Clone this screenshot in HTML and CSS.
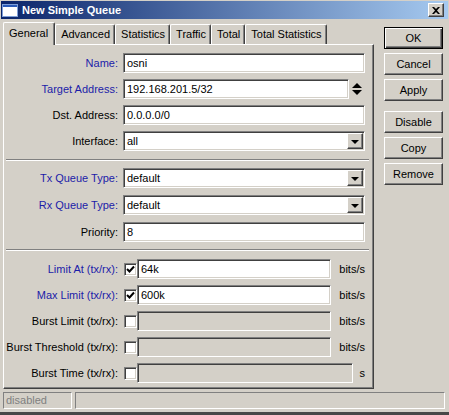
FILE: index.html
```html
<!DOCTYPE html>
<html>
<head>
<meta charset="utf-8">
<link rel="stylesheet" href="styles.css">
</head>
<body>
<div class="window">
  <div class="titlebar">
    <svg class="appicon" width="16" height="14" viewBox="0 0 16 14">
      <rect x="0.5" y="1.5" width="15" height="12" fill="#ffffff" stroke="#7f9fd8"/>
      <rect x="1" y="2" width="14" height="2" fill="#2a5ab8"/>
    </svg>
    <span class="title">New Simple Queue</span>
    <span class="close">
      <svg width="8" height="7" viewBox="0 0 8 7">
        <path d="M0 0 L2 0 L4 2 L6 0 L8 0 L5 3.5 L8 7 L6 7 L4 5 L2 7 L0 7 L3 3.5 Z" fill="#000"/>
      </svg>
    </span>
  </div>

  <div class="main">
    <div class="left">
      <div class="tabs">
        <div class="tab active">General</div>
        <div class="tab">Advanced</div>
        <div class="tab">Statistics</div>
        <div class="tab">Traffic</div>
        <div class="tab">Total</div>
        <div class="tab">Total Statistics</div>
      </div>
      <div class="panel">
        <div class="group g1">
          <div class="row">
            <div class="label blue">Name:</div>
            <div class="input">osni</div>
          </div>
          <div class="row">
            <div class="label blue">Target Address:</div>
            <div class="field">
              <div class="input grow">192.168.201.5/32</div>
              <div class="spin">
                <svg width="10" height="12" viewBox="0 0 10 12">
                  <path d="M5 0 L10 5 L0 5 Z" fill="#000"/>
                  <path d="M0 7 L10 7 L5 12 Z" fill="#000"/>
                </svg>
              </div>
            </div>
          </div>
          <div class="row">
            <div class="label">Dst. Address:</div>
            <div class="input">0.0.0.0/0</div>
          </div>
          <div class="row">
            <div class="label">Interface:</div>
            <div class="input select"><span class="val">all</span><span class="dd"><span class="tri"></span></span></div>
          </div>
        </div>
        <div class="sep"></div>
        <div class="group g2">
          <div class="row">
            <div class="label blue">Tx Queue Type:</div>
            <div class="input select"><span class="val">default</span><span class="dd"><span class="tri"></span></span></div>
          </div>
          <div class="row">
            <div class="label blue">Rx Queue Type:</div>
            <div class="input select"><span class="val">default</span><span class="dd"><span class="tri"></span></span></div>
          </div>
          <div class="row">
            <div class="label">Priority:</div>
            <div class="input">8</div>
          </div>
        </div>
        <div class="sep sep2"></div>
        <div class="group g1">
          <div class="row">
            <div class="label blue">Limit At (tx/rx):</div>
            <div class="field">
              <span class="cb"><svg width="9" height="9" viewBox="0 0 9 9"><path d="M1 4 L3.5 6.5 L8 1.5" stroke="#000" stroke-width="2" fill="none"/></svg></span>
              <div class="input w-bits">64k</div>
              <span class="unit">bits/s</span>
            </div>
          </div>
          <div class="row">
            <div class="label blue">Max Limit (tx/rx):</div>
            <div class="field">
              <span class="cb"><svg width="9" height="9" viewBox="0 0 9 9"><path d="M1 4 L3.5 6.5 L8 1.5" stroke="#000" stroke-width="2" fill="none"/></svg></span>
              <div class="input w-bits">600k</div>
              <span class="unit">bits/s</span>
            </div>
          </div>
          <div class="row">
            <div class="label">Burst Limit (tx/rx):</div>
            <div class="field">
              <span class="cb"></span>
              <div class="input w-bits disabled"></div>
              <span class="unit">bits/s</span>
            </div>
          </div>
          <div class="row">
            <div class="label">Burst Threshold (tx/rx):</div>
            <div class="field">
              <span class="cb"></span>
              <div class="input w-bits disabled"></div>
              <span class="unit">bits/s</span>
            </div>
          </div>
          <div class="row">
            <div class="label">Burst Time (tx/rx):</div>
            <div class="field">
              <span class="cb"></span>
              <div class="input w-s disabled"></div>
              <span class="unit unit-s">s</span>
            </div>
          </div>
        </div>
      </div>
    </div>

    <div class="buttons">
      <div class="btn default">OK</div>
      <div class="btn">Cancel</div>
      <div class="btn">Apply</div>
      <div class="btn gap">Disable</div>
      <div class="btn">Copy</div>
      <div class="btn">Remove</div>
    </div>
  </div>

  <div class="status">
    <div class="cell c1">disabled</div>
    <div class="cell c2"></div>
  </div>
</div>
</body>
</html>
```

FILE: styles.css
```css
* { box-sizing: border-box; }

body {
  margin: 0;
  background: #d4d0c8;
  font-family: "Liberation Sans", Arial, sans-serif;
  font-size: 11px;
  color: #000;
}

.window {
  width: 449px;
  height: 415px;
  background: #d4d0c8;
  padding-top: 1px;
  padding-left: 1px;
  border-bottom: 3px solid #474747;
  display: flex;
  flex-direction: column;
  overflow: hidden;
}

.titlebar {
  height: 18px;
  margin-right: 1px;
  background: linear-gradient(to right, #0a246a, #a6caf0);
  display: flex;
  align-items: center;
  padding-left: 1px;
  padding-right: 4px;
  color: #fff;
  font-weight: bold;
  font-size: 11px;
}

.appicon { margin-right: 4px; }

.title { white-space: nowrap; }

.close {
  margin-left: auto;
  width: 16px;
  height: 14px;
  background: #d4d0c8;
  border: 1px solid;
  border-color: #fff #404040 #404040 #fff;
  box-shadow: inset -1px -1px #808080;
  display: flex;
  align-items: center;
  justify-content: center;
  padding-right: 1px;
}

.main {
  display: flex;
  gap: 10px;
  padding: 3px 0 0 2px;
}

.left { width: 371px; }

.tabs {
  display: flex;
  height: 22px;
  align-items: flex-end;
  position: relative;
  z-index: 1;
}

.tab {
  height: 20px;
  padding: 0 4px 0 5px;
  line-height: 19px;
  white-space: nowrap;
  background: #d4d0c8;
  border-top: 1px solid #fff;
  border-left: 1px solid #fff;
  border-right: 1px solid #404040;
  box-shadow: inset -1px 0 #808080;
  border-radius: 2px 2px 0 0;
}

.tab.active {
  height: 23px;
  line-height: 20px;
  margin-bottom: -1px;
  padding: 0 6px 0 5px;
}

.panel {
  border: 1px solid;
  border-color: #fff #404040 #404040 #fff;
  box-shadow: inset -1px -1px #808080;
  padding: 8px 8px 5px 0;
}

.group {
  display: flex;
  flex-direction: column;
  gap: 6px;
}

.g2 { gap: 7px; }

.row {
  display: grid;
  grid-template-columns: 114px 242px;
  column-gap: 5px;
  height: 20px;
  align-items: center;
}

.label {
  text-align: right;
  white-space: nowrap;
}

.blue { color: #1c1ca8; }

.input {
  height: 20px;
  background: #fff;
  border: 1px solid;
  border-color: #808080 #fff #fff #808080;
  box-shadow: inset 1px 1px #404040, inset -1px -1px #d4d0c8;
  padding-left: 3px;
  line-height: 18px;
  white-space: nowrap;
  overflow: hidden;
}

.input.disabled { background: #d4d0c8; }

.field {
  display: flex;
  align-items: center;
  height: 20px;
}

.grow { flex: 1; }

.spin {
  width: 16px;
  display: flex;
  justify-content: flex-end;
  padding-right: 3px;
}

.select {
  display: flex;
  align-items: center;
  padding: 1px;
}

.select .val {
  flex: 1;
  padding-left: 2px;
}

.dd {
  width: 16px;
  height: 16px;
  background: #d4d0c8;
  border: 1px solid;
  border-color: #fff #404040 #404040 #fff;
  box-shadow: inset -1px -1px #808080;
  display: flex;
  align-items: center;
  justify-content: center;
}

.tri {
  width: 0;
  height: 0;
  border-left: 4px solid transparent;
  border-right: 4px solid transparent;
  border-top: 4px solid #000;
  margin-top: 1px;
}

.sep {
  height: 2px;
  border-top: 1px solid #808080;
  border-bottom: 1px solid #fff;
  margin: 8px -4px 7px 2px;
}

.sep2 { margin: 7px -4px 8px 2px; }

.cb {
  width: 13px;
  height: 13px;
  margin-left: 1px;
  background: #fff;
  border: 1px solid;
  border-color: #808080 #fff #fff #808080;
  box-shadow: inset 1px 1px #404040, inset -1px -1px #d4d0c8;
  display: flex;
  align-items: center;
  justify-content: center;
  flex: none;
}

.w-bits { width: 196px; }
.w-s { width: 218px; }

.unit {
  margin-left: 8px;
  white-space: nowrap;
}

.unit-s { margin-left: 7px; }

.buttons {
  width: 59px;
  display: flex;
  flex-direction: column;
  gap: 4px;
  padding-top: 5px;
}

.btn {
  height: 22px;
  background: #d4d0c8;
  border: 1px solid;
  border-color: #fff #404040 #404040 #fff;
  box-shadow: inset -1px -1px #808080;
  text-align: center;
  line-height: 20px;
  white-space: nowrap;
}

.btn.default {
  border-color: #000;
  box-shadow: inset 1px 1px #fff, inset -1px -1px #404040, inset -2px -2px #808080;
}

.btn.gap { margin-top: 6px; }

.status {
  margin-top: auto;
  margin-bottom: 3px;
  display: flex;
  gap: 3px;
  padding: 0 4px 0 2px;
}

.cell {
  height: 17px;
  border: 1px solid;
  border-color: #808080 #fff #fff #808080;
  line-height: 15px;
  padding-left: 2px;
  color: #808080;
}

.c1 { width: 69px; }
.c2 { flex: 1; }
```
